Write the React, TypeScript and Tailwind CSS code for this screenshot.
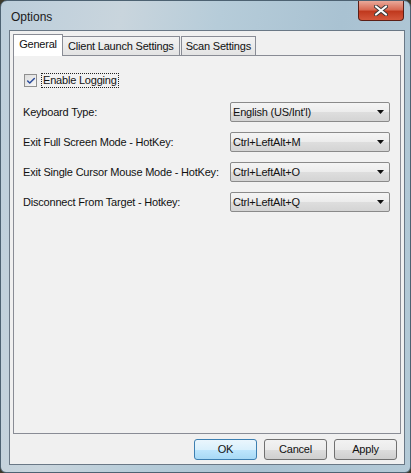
import { Check } from 'lucide-react'

const font = { fontFamily: '"Liberation Sans", Arial, sans-serif' }

type ComboProps = { value: string }

function Combo({ value }: ComboProps) {
  return (
    <div className="flex h-[20px] w-[160px] items-center justify-between rounded-[2px] border border-[#8a8a8a] bg-[linear-gradient(#f4f4f4_0%,#ececec_50%,#dedede_51%,#d4d4d4_100%)] pl-[2px] pr-[5px] text-[11px] tracking-[-0.2px] text-[#111]">
      <span>{value}</span>
      <svg width="7" height="4" viewBox="0 0 7 4">
        <path d="M0 0h7L3.5 4z" fill="#111" />
      </svg>
    </div>
  )
}

type ButtonProps = { label: string; primary?: boolean }

function DialogButton({ label, primary }: ButtonProps) {
  return (
    <button
      className={`flex h-[21px] w-[63px] items-center justify-center rounded-[3px] border text-[11px] tracking-[-0.2px] text-[#111] ${
        primary
          ? 'border-[#3c7fb1] bg-[linear-gradient(#eaf6fd_0%,#d9f0fc_50%,#bee6fd_51%,#a7d9f5_100%)]'
          : 'border-[#707070] bg-[linear-gradient(#f2f2f2_0%,#ebebeb_50%,#dddddd_51%,#cfcfcf_100%)]'
      }`}
    >
      {label}
    </button>
  )
}

const rows = [
  { label: 'Keyboard Type:', value: "English (US/Int'l)" },
  { label: 'Exit Full Screen Mode - HotKey:', value: 'Ctrl+LeftAlt+M' },
  { label: 'Exit Single Cursor Mouse Mode - HotKey:', value: 'Ctrl+LeftAlt+O' },
  { label: 'Disconnect From Target - Hotkey:', value: 'Ctrl+LeftAlt+Q' },
]

export default function App() {
  return (
    <div className="h-[473px] w-[411px] bg-[#3d3a2c]" style={font}>
      <div className="relative flex h-full w-full flex-col rounded-t-[7px] rounded-b-[6px] border border-[#4d6272] bg-[linear-gradient(100deg,#bccedb_0%,#c9d5dd_25%,#b6ccd9_45%,#a9c2d2_70%,#b4cad7_100%)] pb-[7px] pl-[8px] pr-[5px]">
        {/* Title bar */}
        <div className="flex h-[29px] items-center pl-[2px] pt-[2px] text-[12px] text-[#1a1a1a]">Options</div>
        <div className="absolute right-[6px] top-0 flex h-[20px] w-[46px] items-center justify-center rounded-b-[4px] border border-t-0 border-[#5b1e15] bg-[linear-gradient(#e9a99a_0%,#d86b55_45%,#c0391e_55%,#d4573b_100%)]">
          <svg width="14" height="11" viewBox="0 0 14 11">
            <path d="M2 1.5l10 8M12 1.5l-10 8" stroke="#3a3a3a" strokeWidth="4" strokeLinecap="round" />
            <path d="M2 1.5l10 8M12 1.5l-10 8" stroke="#ffffff" strokeWidth="2.2" strokeLinecap="round" />
          </svg>
        </div>

        {/* Client area */}
        <div className="flex flex-1 flex-col border border-[#6a7886] bg-[#f0f0f0] px-[3px] pt-[2px]">
          {/* Tabs */}
          <div className="flex h-[22px] items-end text-[11px] tracking-[-0.2px] text-[#111]">
            <div className="relative z-10 -mb-px flex h-[22px] w-[50px] items-center justify-center border border-b-0 border-[#898c95] bg-white pb-[2px]">
              General
            </div>
            <div className="flex h-[19px] items-center border border-b-0 border-l-0 border-[#898c95] bg-[linear-gradient(#f3f3f3,#e3e3e3)] px-[5px]">
              Client Launch Settings
            </div>
            <div className="ml-px flex h-[19px] items-center border border-b-0 border-[#898c95] bg-[linear-gradient(#f3f3f3,#e3e3e3)] px-[4px]">
              Scan Settings
            </div>
          </div>

          {/* Panel */}
          <div className="flex h-[379px] flex-col border border-[#898c95] bg-[#f1f1f1] px-[9px] pt-[17px] text-[11px] tracking-[-0.2px] text-[#111]">
            <div className="flex items-center gap-[4px] pl-[1px]">
              <div className="flex h-[13px] w-[13px] items-center justify-center border border-[#8f8f8f] bg-[linear-gradient(135deg,#dcdcdc,#f8f8f8)]">
                <Check className="h-[10px] w-[10px] text-[#2a4b9b]" strokeWidth={3.5} />
              </div>
              <span className="border border-dotted border-[#222] px-px leading-[13px]">Enable Logging</span>
            </div>

            <div className="mt-[14px] flex flex-col gap-[10px]">
              {rows.map((r) => (
                <div key={r.label} className="flex items-center justify-between pr-[1px]">
                  <span>{r.label}</span>
                  <Combo value={r.value} />
                </div>
              ))}
            </div>
          </div>

          {/* Buttons */}
          <div className="flex flex-1 items-center justify-end gap-[7px] pr-[4px]">
            <DialogButton label="OK" primary />
            <DialogButton label="Cancel" />
            <DialogButton label="Apply" />
          </div>
        </div>
      </div>
    </div>
  )
}
